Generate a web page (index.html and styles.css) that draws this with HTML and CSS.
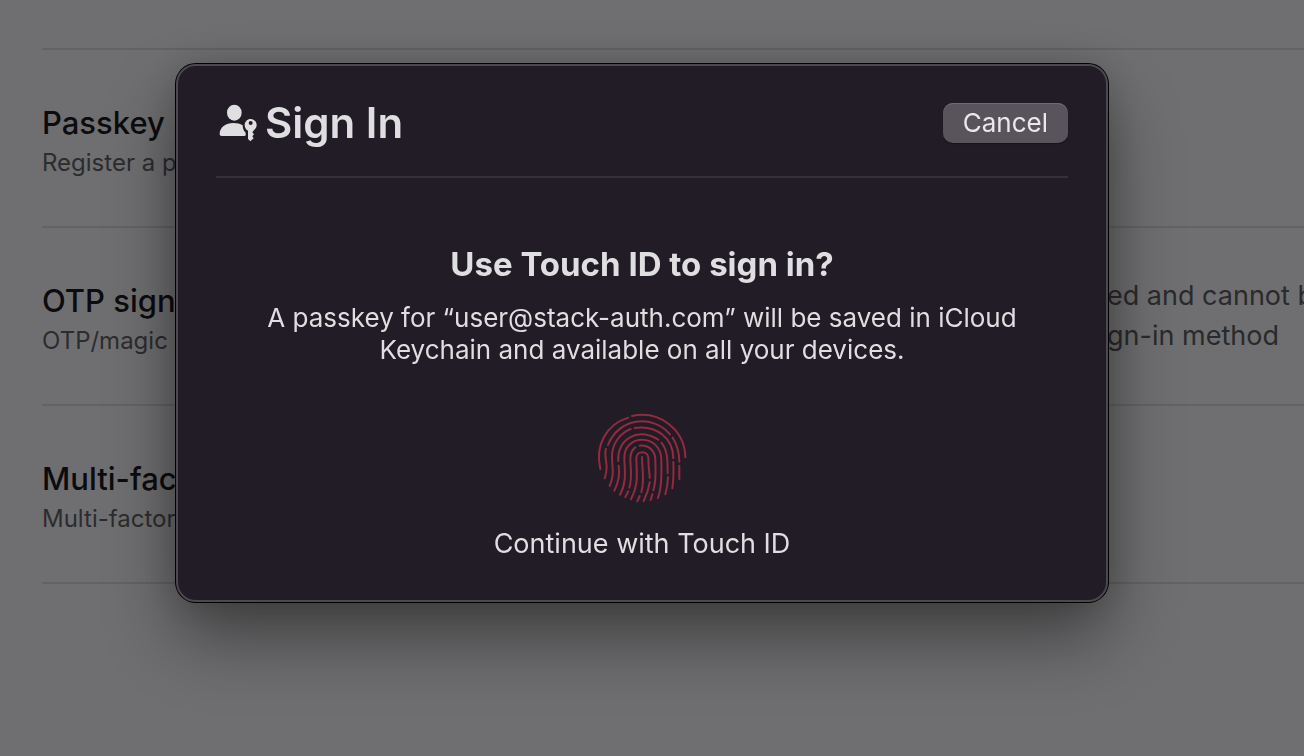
FILE: index.html
```html
<!DOCTYPE html>
<html lang="en">
<head>
<meta charset="utf-8">
<title>Sign In</title>
<link rel="stylesheet" href="styles.css">
</head>
<body>
<main class="settings">
  <section class="setting">
    <div class="setting-label">
      <h2 class="setting-title">Passkey</h2>
      <p class="setting-hint">Register a p</p>
    </div>
  </section>
  <section class="setting">
    <div class="setting-label">
      <h2 class="setting-title">OTP sign</h2>
      <p class="setting-hint">OTP/magic l</p>
    </div>
    <p class="setting-note">ed and cannot b<br>gn-in method</p>
  </section>
  <section class="setting">
    <div class="setting-label">
      <h2 class="setting-title">Multi-fac</h2>
      <p class="setting-hint">Multi-factor</p>
    </div>
  </section>
</main>

<div class="overlay">
  <div class="dialog" role="dialog" aria-modal="true" aria-labelledby="dialog-title">
    <header class="dialog-header">
      <svg class="person-icon" viewBox="0 0 114 114" aria-hidden="true">
        <ellipse cx="46" cy="26" rx="22" ry="24"/>
        <path d="M2 90C2 70 20 57 43 57c12 0 20 2 28 7 0 9 3 17 9 22v7q0 3-4 3H8c-4 0-6-2-6-6z"/>
        <path fill-rule="evenodd" d="M95 45c-10 0-18 8-18 18 0 8 4 14 10 17v25l7 7 10-9-4-6 5-6-5-6 6-8c4-3 7-8 7-14 0-10-8-18-18-18zm0 6a6 6 0 1 1 0 12 6 6 0 0 1 0-12z"/>
      </svg>
      <h1 class="dialog-title" id="dialog-title">Sign In</h1>
      <button class="cancel" type="button">Cancel</button>
    </header>
    <div class="dialog-body">
      <h2 class="question">Use Touch ID to sign in?</h2>
      <p class="explain">A passkey for “user@stack-auth.com” will be saved in iCloud<br>Keychain and available on all your devices.</p>
      <svg class="fingerprint" viewBox="0 0 312 312" aria-hidden="true">
        <path d="M31 192C14 120 50 58 115 38M126 33C210 15 285 75 286 157"/>
        <path d="M54 120C85 40 185 25 240 88M248 98Q268 130 268 170M268 182V222M48 131C42 150 50 170 50 185Q50 205 44 220"/>
        <path d="M59 243C75 205 66 190 66 155C66 115 90 85 122 72M134 69C200 60 250 100 250 160M250 171Q252 215 247 250"/>
        <path d="M85 168C80 105 140 65 205 104M86 182Q92 220 73 257M214 113C232 135 233 160 233 205M234 217Q233 245 226 268"/>
        <path d="M90 269C112 230 103 190 103 160C100 86 214 84 214 165C214 200 218 240 204 279"/>
        <path d="M118 248C128 215 121 190 121 160Q121 138 136 127M149 122C180 120 196 140 196 165C196 195 200 225 190 256M115 259L106 276M187 268L182 285"/>
        <path d="M123 283C148 235 139 205 139 160C139 136 175 136 175 160C175 190 179 200 179 219M179 232Q175 260 161 288"/>
        <path d="M156 156C156 195 165 225 154 262M149 273L142 289"/>
      </svg>
      <p class="continue">Continue with Touch ID</p>
    </div>
  </div>
</div>
</body>
</html>
```
FILE: styles.css
```css
* {
  box-sizing: border-box;
  margin: 0;
}

body {
  min-height: 100vh;
  overflow: hidden;
  background: #6f6f71;
  font-family: Inter, "Liberation Sans", sans-serif;
}

.settings {
  margin: 48px 0 0 42px;
  border-bottom: 2px solid #636365;
}

.setting {
  display: grid;
  grid-template-columns: 1fr 197px;
  align-items: center;
  min-height: 178px;
  border-top: 2px solid #636365;
}

.setting-label {
  padding-top: 2px;
}

.setting-title {
  font-size: 31px;
  font-weight: 500;
  line-height: 48px;
  color: #0c0c0e;
}

.setting-hint {
  font-size: 24px;
  line-height: 32px;
  color: #2c2c2f;
}

.setting-note {
  font-size: 27px;
  line-height: 40px;
  white-space: nowrap;
  color: #2a2a2c;
}

.overlay {
  position: fixed;
  inset: 0;
  display: flex;
  align-items: flex-start;
  padding: 64px 196px 0 176px;
}

.dialog {
  flex: 1;
  padding: 33px 38px 38px;
  border: 2px solid #4b484f;
  border-radius: 20px;
  background: #221c26;
  color: #dfdee0;
  box-shadow: 0 0 0 1px #000, 0 36px 70px rgba(0, 0, 0, 0.42), 0 0 40px rgba(0, 0, 0, 0.16);
}

.dialog-header {
  display: flex;
  align-items: center;
  padding: 0 0 29px 3px;
  border-bottom: 2px solid #363039;
}

.person-icon {
  width: 38px;
  height: 38px;
  margin-right: 8px;
  fill: #dfdee0;
}

.dialog-title {
  font-size: 42px;
  font-weight: 600;
  line-height: 48px;
}

.cancel {
  height: 40px;
  margin-left: auto;
  padding: 0 20px;
  border: 0;
  border-radius: 10px;
  background: #59545c;
  box-shadow: inset 0 1px 0 #716c74, 0 1px 1px #17121a;
  color: #e9e8ea;
  font: 400 26px/38px Inter, "Liberation Sans", sans-serif;
}

.dialog-body {
  display: flex;
  flex-direction: column;
  align-items: center;
  padding-top: 64px;
  text-align: center;
}

.question {
  font-size: 33px;
  font-weight: 700;
  line-height: 44px;
}

.explain {
  margin-top: 16px;
  font-size: 26px;
  line-height: 32px;
}

.fingerprint {
  width: 104px;
  height: 104px;
  margin-top: 39px;
  fill: none;
  stroke: #932a40;
  stroke-width: 6;
  stroke-linecap: round;
}

.continue {
  margin-top: 17px;
  font-size: 27px;
  line-height: 36px;
}
```
